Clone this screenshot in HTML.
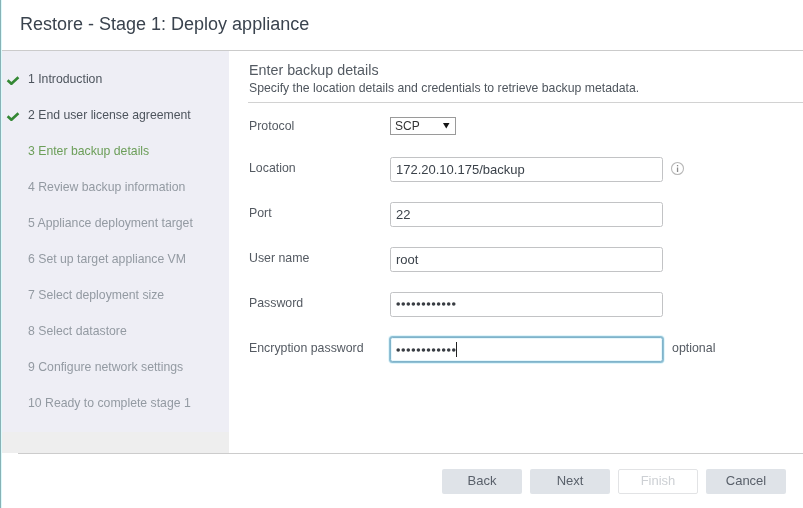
<!DOCTYPE html>
<html><head><meta charset="utf-8">
<style>
*{margin:0;padding:0;box-sizing:border-box}
html,body{width:803px;height:508px;overflow:hidden;background:#fff}
body{position:relative;font-family:"Liberation Sans",sans-serif}
.abs{position:absolute;white-space:pre;line-height:1;will-change:transform}
#lb{position:absolute;left:0;top:0;width:1px;height:508px;background:#87b2b6}
#title{left:19.5px;top:15px;font-size:18px;color:#3a434e}
#hdrline{position:absolute;left:1px;top:50px;width:802px;height:1px;background:#cbcbcb}
#side{position:absolute;left:1px;top:51px;width:228px;height:381px;background:#eeeef5}
#side2{position:absolute;left:1px;top:432px;width:228px;height:21px;background:#eeeeee}
#ftline{position:absolute;left:18px;top:453px;width:785px;height:1px;background:#cccccc}
.si{font-size:12.25px;left:27.5px}
.done{color:#4d545d}
.cur{color:#6c9e59}
.fut{color:#939aa2}
.chk{position:absolute;left:5px;width:16px;height:12px}
.lbl{font-size:12.35px;left:249px;color:#545a62}
.inp{position:absolute;left:390px;width:273px;height:25px;border:1px solid #c2c3c5;border-radius:2.5px;background:#fff}
.itx{font-size:13px;color:#3b424a}
.btn{will-change:transform;position:absolute;top:469px;width:80px;height:25px;border-radius:2px;background:#dfe3e8;font-size:13px;color:#59606a;text-align:center;line-height:24px}
</style></head><body>
<div id="lb"></div><div style="position:absolute;left:1px;top:0;width:1px;height:508px;background:#dcfafb;z-index:2"></div>
<div class="abs" id="title">Restore - Stage 1: Deploy appliance</div>
<div id="hdrline"></div>
<div id="side"></div>
<div id="side2"></div>
<div id="ftline"></div>

<svg class="chk" style="top:73px" viewBox="0 0 16 12"><polyline points="2.6,7.3 6.4,10.8 13.4,4.2" fill="none" stroke="#348834" stroke-width="2.6"/></svg>
<svg class="chk" style="top:109px" viewBox="0 0 16 12"><polyline points="2.6,7.3 6.4,10.8 13.4,4.2" fill="none" stroke="#348834" stroke-width="2.6"/></svg>
<div class="abs si done" style="top:73px">1 Introduction</div>
<div class="abs si done" style="top:109px">2 End user license agreement</div>
<div class="abs si cur" style="top:145px">3 Enter backup details</div>
<div class="abs si fut" style="top:181px">4 Review backup information</div>
<div class="abs si fut" style="top:217px">5 Appliance deployment target</div>
<div class="abs si fut" style="top:253px">6 Set up target appliance VM</div>
<div class="abs si fut" style="top:289px">7 Select deployment size</div>
<div class="abs si fut" style="top:325px">8 Select datastore</div>
<div class="abs si fut" style="top:361px">9 Configure network settings</div>
<div class="abs si fut" style="top:397px">10 Ready to complete stage 1</div>

<div class="abs" style="left:249px;top:62.5px;font-size:14.3px;color:#535a62">Enter backup details</div>
<div class="abs" style="left:249px;top:82px;font-size:12.26px;color:#4f565e">Specify the location details and credentials to retrieve backup metadata.</div>
<div style="position:absolute;left:248px;top:102px;width:555px;height:1px;background:#d2d2d2"></div>

<div class="abs lbl" style="top:120px">Protocol</div>
<div class="abs lbl" style="top:162px">Location</div>
<div class="abs lbl" style="top:207px">Port</div>
<div class="abs lbl" style="top:252px">User name</div>
<div class="abs lbl" style="top:297px">Password</div>
<div class="abs lbl" style="top:342px">Encryption password</div>

<div style="position:absolute;left:390px;top:117px;width:66px;height:18px;border:1px solid #9a9a9a;background:#fff"></div>
<div class="abs" style="left:395px;top:120px;font-size:12px;color:#333">SCP</div>
<svg style="position:absolute;left:443px;top:123px" width="7" height="6" viewBox="0 0 7 6"><polygon points="0,0 6.5,0 3.25,5.5" fill="#151515"/></svg>

<div class="inp" style="top:157px"></div>
<div class="abs itx" style="left:396px;top:163px">172.20.10.175/backup</div>
<svg style="position:absolute;left:670px;top:161px" width="15" height="15" viewBox="0 0 15 15"><circle cx="7.5" cy="7.5" r="6" fill="none" stroke="#b8b8b8" stroke-width="1.1"/><rect x="6.9" y="6.5" width="1.3" height="4.5" fill="#8a8a8a"/><rect x="6.9" y="4" width="1.3" height="1.3" fill="#8a8a8a"/></svg>

<div class="inp" style="top:202px"></div>
<div class="abs itx" style="left:396px;top:208px">22</div>
<div class="inp" style="top:247px"></div>
<div class="abs itx" style="left:396px;top:253px">root</div>
<div class="inp" style="top:292px"></div>
<svg style="position:absolute;left:390px;top:299px" width="70" height="10" viewBox="0 0 70 10"><circle cx="8.20" cy="5" r="1.8" fill="#383c42"/><circle cx="13.25" cy="5" r="1.8" fill="#383c42"/><circle cx="18.30" cy="5" r="1.8" fill="#383c42"/><circle cx="23.35" cy="5" r="1.8" fill="#383c42"/><circle cx="28.40" cy="5" r="1.8" fill="#383c42"/><circle cx="33.45" cy="5" r="1.8" fill="#383c42"/><circle cx="38.50" cy="5" r="1.8" fill="#383c42"/><circle cx="43.55" cy="5" r="1.8" fill="#383c42"/><circle cx="48.60" cy="5" r="1.8" fill="#383c42"/><circle cx="53.65" cy="5" r="1.8" fill="#383c42"/><circle cx="58.70" cy="5" r="1.8" fill="#383c42"/><circle cx="63.75" cy="5" r="1.8" fill="#383c42"/></svg>
<div class="inp" style="top:337px;border-color:#80b3ca;box-shadow:0 0 0 1px #8fc0d5,0 0 0 2px #e2f6fb,inset 0 0 0 1px #e6f7fc"></div>
<svg style="position:absolute;left:390px;top:345px" width="70" height="10" viewBox="0 0 70 10"><circle cx="8.20" cy="5" r="1.8" fill="#383c42"/><circle cx="13.25" cy="5" r="1.8" fill="#383c42"/><circle cx="18.30" cy="5" r="1.8" fill="#383c42"/><circle cx="23.35" cy="5" r="1.8" fill="#383c42"/><circle cx="28.40" cy="5" r="1.8" fill="#383c42"/><circle cx="33.45" cy="5" r="1.8" fill="#383c42"/><circle cx="38.50" cy="5" r="1.8" fill="#383c42"/><circle cx="43.55" cy="5" r="1.8" fill="#383c42"/><circle cx="48.60" cy="5" r="1.8" fill="#383c42"/><circle cx="53.65" cy="5" r="1.8" fill="#383c42"/><circle cx="58.70" cy="5" r="1.8" fill="#383c42"/><circle cx="63.75" cy="5" r="1.8" fill="#383c42"/></svg>
<div style="position:absolute;left:456px;top:342px;width:1px;height:15px;background:#222"></div>
<div class="abs" style="left:671.5px;top:342px;font-size:12.4px;color:#545a62">optional</div>

<div class="btn" style="left:442px">Back</div>
<div class="btn" style="left:530px">Next</div>
<div class="btn" style="left:618px;background:#fff;border:1px solid #e2e3e5;color:#cdd0d4;line-height:22px">Finish</div>
<div class="btn" style="left:706px">Cancel</div>
</body></html>
